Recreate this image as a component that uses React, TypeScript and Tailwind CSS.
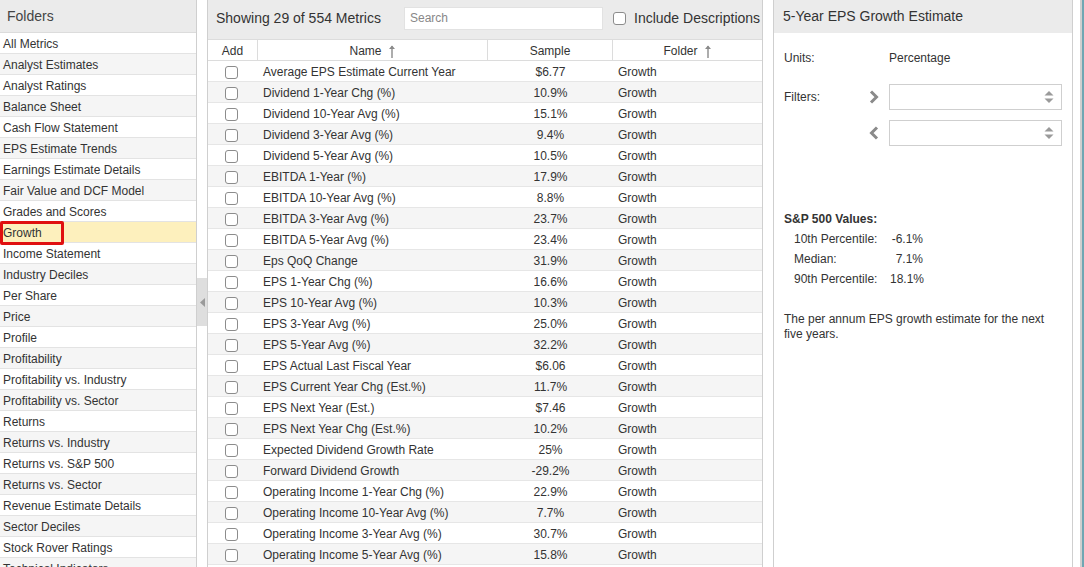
import React from "react";

const folders = [
  "All Metrics",
  "Analyst Estimates",
  "Analyst Ratings",
  "Balance Sheet",
  "Cash Flow Statement",
  "EPS Estimate Trends",
  "Earnings Estimate Details",
  "Fair Value and DCF Model",
  "Grades and Scores",
  "Growth",
  "Income Statement",
  "Industry Deciles",
  "Per Share",
  "Price",
  "Profile",
  "Profitability",
  "Profitability vs. Industry",
  "Profitability vs. Sector",
  "Returns",
  "Returns vs. Industry",
  "Returns vs. S&P 500",
  "Returns vs. Sector",
  "Revenue Estimate Details",
  "Sector Deciles",
  "Stock Rover Ratings",
  "Technical Indicators",
];

const metrics: [string, string][] = [
  ["Average EPS Estimate Current Year", "$6.77"],
  ["Dividend 1-Year Chg (%)", "10.9%"],
  ["Dividend 10-Year Avg (%)", "15.1%"],
  ["Dividend 3-Year Avg (%)", "9.4%"],
  ["Dividend 5-Year Avg (%)", "10.5%"],
  ["EBITDA 1-Year (%)", "17.9%"],
  ["EBITDA 10-Year Avg (%)", "8.8%"],
  ["EBITDA 3-Year Avg (%)", "23.7%"],
  ["EBITDA 5-Year Avg (%)", "23.4%"],
  ["Eps QoQ Change", "31.9%"],
  ["EPS 1-Year Chg (%)", "16.6%"],
  ["EPS 10-Year Avg (%)", "10.3%"],
  ["EPS 3-Year Avg (%)", "25.0%"],
  ["EPS 5-Year Avg (%)", "32.2%"],
  ["EPS Actual Last Fiscal Year", "$6.06"],
  ["EPS Current Year Chg (Est.%)", "11.7%"],
  ["EPS Next Year (Est.)", "$7.46"],
  ["EPS Next Year Chg (Est.%)", "10.2%"],
  ["Expected Dividend Growth Rate", "25%"],
  ["Forward Dividend Growth", "-29.2%"],
  ["Operating Income 1-Year Chg (%)", "22.9%"],
  ["Operating Income 10-Year Avg (%)", "7.7%"],
  ["Operating Income 3-Year Avg (%)", "30.7%"],
  ["Operating Income 5-Year Avg (%)", "15.8%"],
  ["Revenue 1-Year Chg (%)", "9.1%"],
];

function SortArrow() {
  return (
    <svg width="8" height="14" viewBox="0 0 8 14" className="ml-[6px] inline-block">
      <path d="M4 2 V14" stroke="#8a8a8a" strokeWidth="1.4" />
      <path d="M1 5 L4 1.5 L7 5 Z" fill="#8a8a8a" />
    </svg>
  );
}

function Checkbox() {
  return <span className="inline-block h-[13px] w-[13px] rounded-[3px] border border-[#8c8c8c] bg-white" />;
}

function Spinner() {
  return (
    <svg width="10" height="14" viewBox="0 0 10 14">
      <path d="M0.5 5.5 L5 1 L9.5 5.5 Z" fill="#9a9a9a" />
      <path d="M0.5 8.5 L5 13 L9.5 8.5 Z" fill="#9a9a9a" />
    </svg>
  );
}

function Chevron({ dir }: { dir: "right" | "left" }) {
  return (
    <svg width="12" height="14" viewBox="0 0 12 14">
      <path
        d={dir === "right" ? "M3 1.5 L8.5 7 L3 12.5" : "M9 1.5 L3.5 7 L9 12.5"}
        fill="none"
        stroke="#8a8a8a"
        strokeWidth="3"
      />
    </svg>
  );
}

export default function App() {
  return (
    <div className="flex h-[567px] w-[1084px] overflow-hidden bg-white font-['Liberation_Sans',Arial,sans-serif] text-[12px] text-[#333]">
      {/* folders */}
      <aside className="relative w-[197px] shrink-0 border-r border-[#cfcfcf]">
        <div className="flex h-[33px] items-center border-b border-[#dcdcdc] bg-[#ebebeb] pl-[7px] text-[14px] text-[#444]">
          Folders
        </div>
        <ul>
          {folders.map((f, i) => (
            <li
              key={f}
              className={`flex h-[21px] items-center border-b border-[#e3e3e3] pl-[3px] pt-[2px] ${
                f === "Growth" ? "bg-[#fdf0bd]" : i % 2 ? "bg-[#f5f5f5]" : "bg-white"
              }`}
            >
              {f}
            </li>
          ))}
        </ul>
        <div className="absolute left-0 top-[221px] h-[24px] w-[64px] rounded-[2px] border-[3px] border-[#e01010]" />
      </aside>

      {/* collapse handle */}
      <div className="flex w-[10px] shrink-0 flex-col">
        <div className="h-[278px]" />
        <div className="flex h-[48px] items-center justify-center bg-[#dedede]">
          <svg width="5" height="9" viewBox="0 0 5 9">
            <path d="M5 0 L0 4.5 L5 9 Z" fill="#9a9a9a" />
          </svg>
        </div>
      </div>

      {/* metrics list */}
      <section className="w-[556px] shrink-0 border-x border-[#cfcfcf]">
        <div className="flex h-[39px] items-center bg-[#ebebeb] pb-[3px] pl-[8px] text-[14px]">
          <span className="w-[188px] whitespace-nowrap">Showing 29 of 554 Metrics</span>
          <div className="flex h-[23px] w-[199px] items-center border border-[#e2e2e2] bg-white pl-[5px] text-[12px] text-[#888]">
            Search
          </div>
          <span className="ml-[10px] inline-block h-[13px] w-[13px] shrink-0 rounded-[3px] border border-[#8c8c8c] bg-white" />
          <span className="ml-[8px] whitespace-nowrap">Include Descriptions</span>
        </div>
        <div className="flex h-[22px] items-center border-y border-[#dcdcdc] bg-white">
          <div className="flex h-full w-[50px] items-center justify-center border-r border-[#dcdcdc] pt-[2px]">Add</div>
          <div className="flex h-full w-[230px] items-center justify-center border-r border-[#dcdcdc] pt-[2px]">
            Name
            <SortArrow />
          </div>
          <div className="flex h-full w-[125px] items-center justify-center border-r border-[#dcdcdc] pt-[2px]">Sample</div>
          <div className="flex h-full flex-1 items-center justify-center pt-[2px]">
            Folder
            <SortArrow />
          </div>
        </div>
        {metrics.map(([name, val], i) => (
          <div
            key={name}
            className={`flex h-[21px] items-center border-b border-[#e6e6e6] pt-[2px] ${i % 2 ? "bg-[#f5f5f5]" : "bg-white"}`}
          >
            <div className="flex w-[50px] justify-center pr-[4px]">
              <Checkbox />
            </div>
            <div className="w-[230px] pl-[5px]">{name}</div>
            <div className="w-[125px] text-center">{val}</div>
            <div className="flex-1 pl-[5px]">Growth</div>
          </div>
        ))}
      </section>

      <div className="w-[10px] shrink-0" />

      {/* detail */}
      <section className="w-[300px] shrink-0 border-x border-[#cfcfcf]">
        <div className="flex h-[33px] items-center bg-[#ebebeb] pl-[9px] text-[14px]">5-Year EPS Growth Estimate</div>
        <div className="pl-[10px] pr-[10px]">
          <div className="mt-[16px] flex items-center">
            <span className="w-[105px]">Units:</span>
            <span>Percentage</span>
          </div>
          <div className="mt-[17px] flex items-center">
            <span className="w-[80px]">Filters:</span>
            <span className="flex w-[25px] justify-start pl-[4px]">
              <Chevron dir="right" />
            </span>
            <div className="flex h-[26px] w-[173px] items-center justify-end border border-[#cfcfcf] pr-[7px]">
              <Spinner />
            </div>
          </div>
          <div className="mt-[10px] flex items-center">
            <span className="w-[80px]" />
            <span className="flex w-[25px] justify-start pl-[4px]">
              <Chevron dir="left" />
            </span>
            <div className="flex h-[26px] w-[173px] items-center justify-end border border-[#cfcfcf] pr-[7px]">
              <Spinner />
            </div>
          </div>
          <div className="mt-[63px] font-bold leading-[20px]">S&amp;P 500 Values:</div>
          <div className="pl-[10px] leading-[20px]">
            <div className="flex">
              <span className="w-[96px]">10th Percentile:</span>
              <span className="w-[33px] text-right">-6.1%</span>
            </div>
            <div className="flex">
              <span className="w-[96px]">Median:</span>
              <span className="w-[33px] text-right">7.1%</span>
            </div>
            <div className="flex">
              <span className="w-[96px]">90th Percentile:</span>
              <span className="w-[33px] text-right">18.1%</span>
            </div>
          </div>
          <p className="mt-[23px] leading-[15px]">The per annum EPS growth estimate for the next five years.</p>
        </div>
      </section>

      <div className="w-[7px] shrink-0" />
      <div className="w-[2px] shrink-0 bg-[#cfcfcf]" />
      <div className="w-[2px] shrink-0 bg-[#6fa6b3]" />
    </div>
  );
}
